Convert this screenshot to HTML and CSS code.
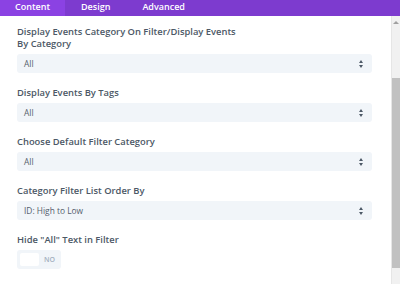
FILE: index.html
```html
<!DOCTYPE html>
<html>

<head>
    <meta charset="utf-8">
    <title>Module Settings</title>
    <link rel="stylesheet" href="styles.css">
</head>

<body>
    <div class="tabs">
        <div class="tab active">Content</div>
        <div class="tab">Design</div>
        <div class="tab">Advanced</div>
    </div>

    <div class="panel">
        <div class="fields">
            <div class="field">
                <label class="wrap">Display Events Category On Filter/Display Events By Category</label>
                <div class="select">All <span class="arrows"></span></div>
            </div>
            <div class="field">
                <label>Display Events By Tags</label>
                <div class="select">All <span class="arrows"></span></div>
            </div>
            <div class="field">
                <label>Choose Default Filter Category</label>
                <div class="select">All <span class="arrows"></span></div>
            </div>
            <div class="field">
                <label>Category Filter List Order By</label>
                <div class="select">ID: High to Low <span class="arrows"></span></div>
            </div>
            <div class="field">
                <label>Hide "All" Text in Filter</label>
                <div class="toggle">
                    <span class="knob"></span>
                    <span class="toggle-text">NO</span>
                </div>
            </div>
        </div>

        <div class="scrollbar">
            <div class="scroll-up"></div>
            <div class="scroll-thumb"></div>
        </div>
    </div>
</body>

</html>
```

FILE: styles.css
```css
body {
    margin: 0;
    font-family: "Open Sans", Arial, sans-serif;
    background-color: white;
    height: 284px;
    overflow: hidden;
}

.tabs {
    display: flex;
    height: 16px;
    background-color: #7d3bcf;
}

.tab {
    color: white;
    font-size: 9px;
    font-weight: 600;
    line-height: 14px;
    padding: 0 16px;
}

.tab.active {
    background-color: #8b42e3;
    padding: 0 16px 0 15px;
    width: 34px;
}

.panel {
    display: flex;
    height: 268px;
}

.fields {
    flex: 1;
    padding: 10px 19px 0 17px;
}

.field {
    margin-bottom: 14px;
}

label {
    display: block;
    color: #4c5866;
    font-size: 9.4px;
    font-weight: 600;
    line-height: 12px;
    margin-bottom: 4px;
}

label.wrap {
    max-width: 228px;
}

.select {
    position: relative;
    height: 19px;
    line-height: 19px;
    background-color: #f1f5f9;
    border-radius: 3px;
    padding-left: 7px;
    color: #55606d;
    font-size: 8.4px;
}

.arrows {
    position: absolute;
    right: 8px;
    top: 6px;
    width: 5px;
    height: 8px;
}

.arrows::before,
.arrows::after {
    content: "";
    position: absolute;
    left: 0;
    border-left: 2.5px solid transparent;
    border-right: 2.5px solid transparent;
}

.arrows::before {
    top: 0;
    border-bottom: 3px solid #4c5866;
}

.arrows::after {
    bottom: 0;
    border-top: 3px solid #4c5866;
}

.toggle {
    display: flex;
    align-items: center;
    width: 44px;
    height: 19px;
    background-color: #f1f5f9;
    border-radius: 3px;
}

.knob {
    width: 19px;
    height: 13px;
    margin-left: 3px;
    background-color: white;
    border-radius: 2px;
}

.toggle-text {
    margin-left: 5px;
    color: #a3b0bf;
    font-size: 7px;
    font-weight: 600;
}

.scrollbar {
    width: 8px;
    background-color: #f1f1f1;
    border-left: 1px solid #e6e6e6;
    display: flex;
    flex-direction: column;
}

.scroll-up {
    height: 10px;
    margin-top: 2px;
    position: relative;
}

.scroll-up::before {
    content: "";
    position: absolute;
    left: 1px;
    top: 3px;
    border-left: 3px solid transparent;
    border-right: 3px solid transparent;
    border-bottom: 3px solid #a0a0a0;
}

.scroll-thumb {
    margin-top: 50px;
    height: 190px;
    background-color: #c1c1c1;
}
```
